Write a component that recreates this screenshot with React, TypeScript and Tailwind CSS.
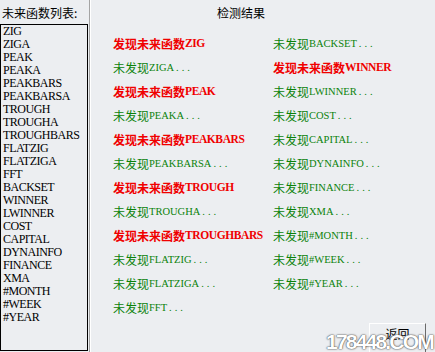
import React from 'react';

const funcs = [
  'ZIG', 'ZIGA', 'PEAK', 'PEAKA', 'PEAKBARS', 'PEAKBARSA', 'TROUGH', 'TROUGHA',
  'TROUGHBARS', 'FLATZIG', 'FLATZIGA', 'FFT', 'BACKSET', 'WINNER', 'LWINNER',
  'COST', 'CAPITAL', 'DYNAINFO', 'FINANCE', 'XMA', '#MONTH', '#WEEK', '#YEAR',
];

// functions flagged as "future" (red rows)
const found = new Set(['ZIG', 'PEAK', 'PEAKBARS', 'TROUGH', 'TROUGHBARS', 'WINNER']);

const Result: React.FC<{ name: string }> = ({ name }) => {
  if (found.has(name)) {
    return (
      <div className="h-[24px] flex items-center text-[#f00000] font-bold whitespace-nowrap">
        <span className="font-['Noto_Sans_CJK_SC',sans-serif] text-[12px]">发现未来函数</span>
        <span className="font-['Liberation_Serif',serif] text-[11.5px] tracking-[-0.4px]">{name}</span>
      </div>
    );
  }
  return (
    <div className="h-[24px] flex items-center text-[#0a820a] whitespace-nowrap">
      <span className="font-['Noto_Sans_CJK_SC',sans-serif] text-[12px]">未发现</span>
      <span className="font-['Liberation_Serif',serif] text-[10.5px]">{name}</span>
      <span className="font-['Liberation_Serif',serif] text-[10.5px] pl-[2px] tracking-[3px]">...</span>
    </div>
  );
};

const App: React.FC = () => {
  const left = funcs.slice(0, 12);
  const right = funcs.slice(12);

  return (
    <div className="relative w-[435px] h-[352px] bg-[#eceef1] flex overflow-hidden text-black">
      {/* Function list */}
      <div className="w-[88px] flex flex-col">
        <div className="h-[24px] pl-[2px] pt-[5px] text-[12px] leading-[16px] font-['Noto_Sans_CJK_SC',sans-serif]">
          未来函数列表:
        </div>
        <div className="h-[327px] border border-black pl-[2px] font-['Liberation_Serif',serif] text-[12px] leading-[13px] tracking-[-0.5px]">
          {funcs.map((f) => (
            <div key={f}>{f}</div>
          ))}
        </div>
      </div>

      {/* Divider */}
      <div className="ml-[1px] w-[2px] border-l border-l-[#a4a4a4] border-r border-r-white" />

      {/* Results */}
      <div className="flex-1 flex flex-col">
        <div className="pt-[5px] pl-[126px] text-[12px] leading-[16px] font-['Noto_Sans_CJK_SC',sans-serif]">
          检测结果
        </div>
        <div className="mt-[8px] ml-[22px] w-[289px] h-[1px] bg-[#a8a8a8]" />
        <div className="mt-[3px] ml-[22px] flex">
          <div className="w-[160px] flex flex-col">
            {left.map((f) => (
              <Result key={f} name={f} />
            ))}
          </div>
          <div className="flex flex-col">
            {right.map((f) => (
              <Result key={f} name={f} />
            ))}
          </div>
        </div>
        <div className="mt-[3px] flex justify-end pr-[9px]">
          <button className="w-[57px] h-[30px] flex justify-center items-start pt-[2px] border-t border-l border-t-white border-l-white border-r border-r-[#6a6a6a] text-[12px] leading-[16px] font-['Noto_Sans_CJK_SC',sans-serif]">
            返回
          </button>
        </div>
      </div>

      {/* Watermark */}
      <div className="absolute left-[326px] top-[330px] text-[21px] leading-[24px] font-bold tracking-[-1.8px] text-white font-['Liberation_Sans',sans-serif] [text-shadow:0_0_2px_#444,0_0_1px_#444]">
        178448.COM
      </div>
    </div>
  );
};

export default App;
